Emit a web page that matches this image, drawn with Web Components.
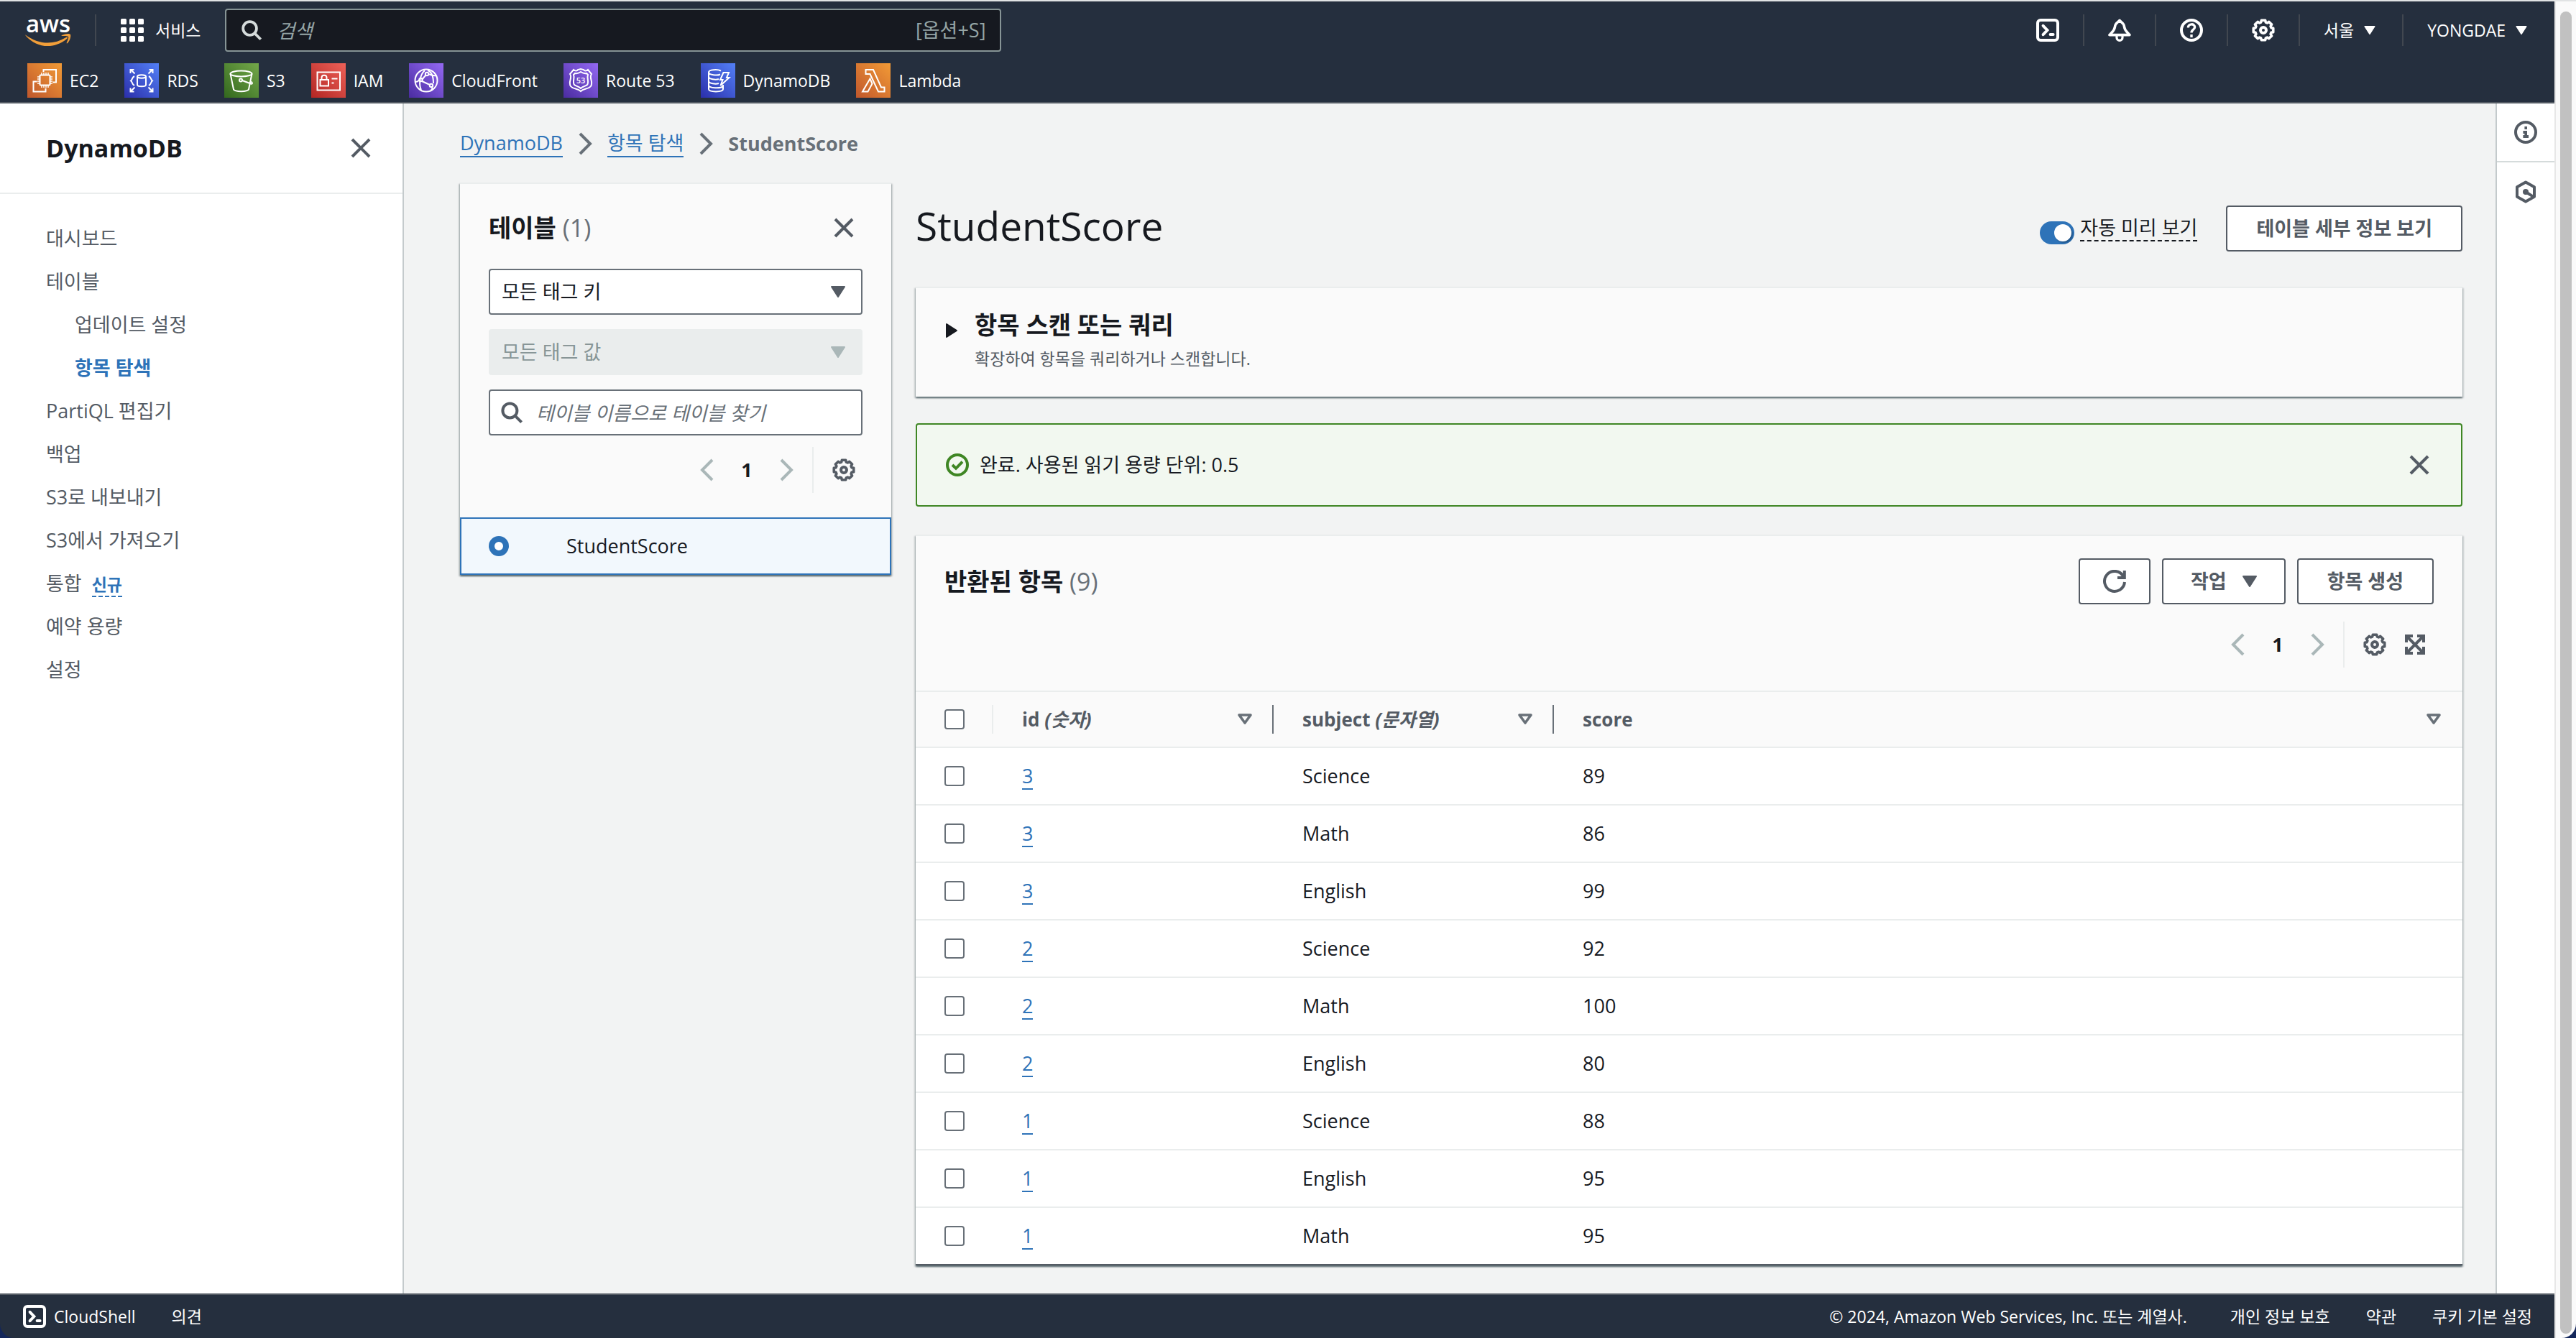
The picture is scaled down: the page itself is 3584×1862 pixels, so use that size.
<!DOCTYPE html>
<html lang="ko">
<head>
<meta charset="utf-8">
<title>DynamoDB - StudentScore</title>
<style>
  :root {
    --ink: #16191f; --body: #545b64; --muted: #687078; --faint: #aab7b8;
    --line: #eaeded; --blue: #2e73b8; --navy: #252f3e; --green: #3f8624;
    --t-xs: 23px; --t-md: 27px; --t-lg: 34px; --t-xl: 55px;
  }
  html { background: #13265a; }
  body {
    margin: 0; color: var(--ink); font-size: var(--t-md); line-height: 40px;
    font-family: "Open Sans", "Noto Sans CJK KR", sans-serif;
  }
</style>
</head>
<body>
<console-app></console-app>

<script>
const RESET = `
  *, *::before { box-sizing: border-box; }
  h1, h2, p, ul, ol { margin: 0; padding: 0; list-style: none; }
  a { color: inherit; text-decoration: none; }
  button, input, select { font: inherit; color: inherit; margin: 0; }
  button { background: none; border: 0; padding: 0; display: flex; align-items: center; cursor: pointer; }
`;
function define(tag, css, html) {
  customElements.define(tag, class extends HTMLElement {
    constructor() {
      super();
      const root = this.attachShadow({ mode: 'open' });
      const markup = typeof html === 'function' ? html(this) : html;
      root.innerHTML = `<style>${RESET}${css}</style>${markup}`;
    }
  });
}

/* ---------- icons ---------- */
function gearPath() {
  const pts = [];
  for (let i = 0; i < 8; i++) {
    const c = i * Math.PI / 4;
    for (const [d, r] of [[-0.3, 5.7], [-0.19, 7], [0.19, 7], [0.3, 5.7]])
      pts.push((8 + r * Math.sin(c + d)).toFixed(2) + ' ' + (8 - r * Math.cos(c + d)).toFixed(2));
  }
  return 'M' + pts.join('L') + 'Z';
}
const ICONS = {
  close: '<path d="M2 2l12 12M14 2L2 14"/>',
  right: '<path d="M4.5 1l7 7-7 7"/>',
  left: '<path d="M11.5 1l-7 7 7 7"/>',
  caret: '<path d="M3.5 4.5h9l-4.5 7z" fill="currentColor" stroke-width="1" stroke-linejoin="round"/>',
  play: '<path d="M4.5 3.5v9l7-4.5z" fill="currentColor" stroke-width="1" stroke-linejoin="round"/>',
  sort: '<path d="M4 5h8l-4 5.5z" stroke-width="1.8" stroke-linejoin="round"/>',
  search: '<circle cx="6.7" cy="6.7" r="5"/><path d="M10.2 10.2l4.6 4.6"/>',
  gear: `<path d="${gearPath()}" stroke-width="1.8" stroke-linejoin="round"/><circle cx="8" cy="8" r="2"/>`,
  expand: '<path d="M2 6.5V2h4.5M9.5 2H14v4.5M14 9.5V14H9.5M6.5 14H2V9.5M2 2l12 12M14 2L2 14"/>',
  refresh: '<path d="M15 8.5A7 7 0 1 1 14 4.3M10 5.5h4.900V0.5"/>',
  terminal: '<rect x="1" y="1" width="14" height="14" rx="2"/><path d="M4.8 4.9L7.7 8l-2.9 3.1M9.8 11h2" stroke-linecap="round"/>',
  bell: '<path d="M8 1.2C7 2.6 5 2.8 4.7 5.8 4.4 8.5 2.7 9.3 1 11.3h14c-1.7-2-3.4-2.8-3.7-5.5C11 2.8 9 2.6 8 1.2z" stroke-width="1.8" stroke-linejoin="round"/><path d="M6 12v1.2a2 2 0 0 0 4 0V12" stroke-width="1.6"/>',
  help: '<circle cx="8" cy="8" r="7"/><path d="M5.7 6.2c0-3 4.6-3 4.6-.3C10.3 7.7 8 7.6 8 9.7M8 11v2" stroke-width="1.7"/>',
  info: '<circle cx="8" cy="8" r="7"/><path d="M7.2 4v2h1.8V4zM6.2 7h2.8v3h1v2H6.2v-2h1V9h-1z" fill="currentColor" stroke="none"/>',
  hex: '<path d="M8 1.2l6 3.4v6.8l-6 3.4-6-3.4V4.6z" stroke-linejoin="round"/><circle cx="8" cy="8" r="2" fill="currentColor" stroke="none"/><path d="M8 8l5 3.2"/>',
  ok: '<circle cx="8" cy="8" r="7"/><path d="M4.5 8l2.5 2.4 4.5-4.6"/>',
  grid: '<g fill="currentColor" stroke="none">' + [0, 6, 12].map(y => [0, 6, 12].map(x =>
    `<rect x="${x}" y="${y}" width="4" height="4" rx="0.8"/>`).join('')).join('') + '</g>'
};
define('ui-icon', `
  :host { display: block; flex: none; width: var(--icon, 32px); height: var(--icon, 32px); }
  svg { display: block; width: 100%; height: 100%; fill: none; stroke: currentColor; stroke-width: 2; }
`, el => `<svg viewBox="0 0 16 16" aria-hidden="true">${ICONS[el.getAttribute('name')]}</svg>`);

const SERVICES = {
  ec2: ['#c0572c', '#f29b36', '<rect x="17.5" y="16.5" width="14" height="14" rx="1"/><path d="M20 16v-3M23 16v-3M26 16v-3M29 16v-3M20 34v-3M23 34v-3M26 34v-3M29 34v-3M17 19h-3M17 22h-3M17 25h-3M17 28h-3M35 19h-3M35 22h-3M35 25h-3M35 28h-3" stroke-width="1.5"/><path d="M22.5 12V9H40v17.5h-4.5M13.5 25.5h-5v14h17V35"/>'],
  rds: ['#2b2faa', '#5380f7', '<ellipse cx="24" cy="18.5" rx="6" ry="2.2"/><path d="M18 18.5v11.5c0 3 12 3 12 0V18.5M14 18c-4 2-2 4-5 6.5 3 2 1 4.5 5 6.5M34 18c4 2 2 4 5 6.5-3 2-1 4.5-5 6.5M8.5 14V9h5M9 9l5.5 5.5M39.5 14V9h-5M39 9l-5.5 5.5M8.5 34.5v5h5M9 39l5.5-5.5M39.5 34.5v5h-5M39 39l-5.5-5.5"/>'],
  s3: ['#33681e', '#74a84a', '<ellipse cx="23.5" cy="14.5" rx="15" ry="4"/><path d="M8.5 14.5L13 36.5c2 3.5 19 3.5 21 0l4.5-22M25 24l12 4.5c3 1 2-1.5.5-3"/><circle cx="23" cy="23.5" r="2"/>'],
  iam: ['#b22623', '#ee6158', '<rect x="8.5" y="12.5" width="31.5" height="25"/><rect x="12.5" y="23" width="11.5" height="8.5"/><path d="M14.5 23v-3c0-4.5 7-4.5 7 0v3M28.5 21.5h8M28.5 27.5h3"/>'],
  cf: ['#4a2ca0', '#9469f3', '<circle cx="24" cy="24" r="15.5"/><path d="M9 26c4 0 4-2 6-3M17 37c-3-6-3-20 5-27M30 38c4-2 2-4 1-6M26 10c6 2 8 8 8 18M38 17c-3 1-6 0-11-2M18 23l5-6M18 25l11 5"/><circle cx="16.5" cy="23" r="2.2"/><circle cx="25" cy="15" r="2.2"/><circle cx="31" cy="31" r="2.2"/>'],
  r53: ['#4a2ca0', '#9469f3', '<path d="M14 9c2 2 5 2 6 0l4-1 4 1c1 2 4 2 6 0l5 6c-4 5 3 11-1 17-3 4-10 3-14 7-4-4-11-3-14-7-4-6 3-12-1-17z"/><path d="M16 14c3 1 5 0 8-2 3 2 5 3 8 2l2 2c-2 5 2 10-1 14-2 2-6 2-9 5-3-3-7-3-9-5-3-4 1-9-1-14z"/><text x="24" y="28" text-anchor="middle" font-size="11" font-weight="600" fill="#fff" stroke="none">53</text>'],
  ddb: ['#2b2faa', '#5380f7', '<path d="M28 10.5c-5-2.5-17-1.5-17 2 0 4 12 5 16 3M11 12.5V36c0 4.5 20 4.5 20 0v-6M11 18.5c0 4 10 5 14 3.5M11 24.5c0 4 10 5 14 3.5M11 30.5c0 4.5 17 5 20 1.5M31.5 13H39l-3 7h3.5L27.5 31l3-8H27z"/>'],
  lambda: ['#c0572c', '#f29b36', '<path d="M13.5 9H24l11 24.5h4.5v6H31L19.5 15h-6zM19.5 21.5L9 39.5h7.5l6-11z"/>']
};
define('service-shortcut', `
  :host { display: block; }
  a { display: flex; align-items: center; gap: 11px; font-size: var(--t-xs); font-weight: 500; color: #fff; }
  svg { display: block; width: 48px; height: 48px; fill: none; stroke: #fff; stroke-width: 2; }
`, el => {
  const k = el.getAttribute('kind'), s = SERVICES[k];
  return `<a href="#"><svg viewBox="0 0 48 48" aria-hidden="true">
    <linearGradient id="g" x1="0" y1="1" x2="1" y2="0"><stop offset="0" stop-color="${s[0]}"/><stop offset="1" stop-color="${s[1]}"/></linearGradient>
    <rect width="48" height="48" fill="url(#g)" stroke="none"/>${s[2]}</svg><slot></slot></a>`;
});

/* ---------- top bar ---------- */
define('top-nav', `
  :host { display: block; background: var(--navy); color: #fff; border-top: 2px solid #e1e3e4; border-bottom: 2px solid #545b64; }
  .bar { display: flex; align-items: center; height: 80px; padding: 0 34px; font-size: var(--t-xs); }
  .logo { display: block; width: 66px; height: 72px; margin-right: 32px; }
  i { width: 2px; height: 44px; background: #414750; }
  .services { gap: 16px; margin: 0 34px; }
  .search { display: grid; grid-template-columns: 1fr; align-items: center; width: 1080px; height: 60px; font-size: var(--t-md); color: #95a5a6; }
  .search > * { grid-area: 1 / 1; }
  .search input { width: 100%; height: 60px; padding: 0 120px 0 70px; background: #161920; border: 2px solid #879596; border-radius: 4px; }
  .search input::placeholder { color: #95a5a6; font-style: italic; opacity: 1; }
  .search ui-icon { --icon: 30px; margin-left: 22px; color: #d5dbdb; z-index: 1; }
  .search kbd { font: inherit; justify-self: end; margin-right: 22px; }
  .tools { display: flex; align-items: center; gap: 33px; margin-left: auto; }
  .tools button { gap: 10px; font-weight: 500; }
  .tools .ko { font-weight: 400; }
  .tools .menu ui-icon { --icon: 24px; }
  .favs { display: flex; gap: 36px; height: 60px; padding: 6px 38px; }
`, `
  <div class="bar">
    <a href="#" aria-label="AWS"><svg class="logo" viewBox="0 -12 66 72">
      <text x="33" y="27" text-anchor="middle" font-size="33" font-weight="600" fill="#fff">aws</text>
      <path d="M2 31c18 13 38 14 56 3 2-1 3 1 1 2-18 15-42 13-57-4-1-1 0-2 0-1z" fill="#f19e39"/>
      <path d="M52 31c5-2 10-3 12-1 1 3-1 9-4 12-1 1-2 0-1-1 1-3 3-7 2-8-1-1-5-1-8-1-2 0-2-1-1-1z" fill="#f19e39"/></svg></a>
    <i></i>
    <button class="services"><ui-icon name="grid"></ui-icon>서비스</button>
    <div class="search"><input type="search" aria-label="검색" placeholder="검색"><ui-icon name="search"></ui-icon><kbd>[옵션+S]</kbd></div>
    <div class="tools">
      <button aria-label="CloudShell"><ui-icon name="terminal"></ui-icon></button><i></i>
      <button aria-label="알림"><ui-icon name="bell"></ui-icon></button><i></i>
      <button aria-label="도움말"><ui-icon name="help"></ui-icon></button><i></i>
      <button aria-label="설정"><ui-icon name="gear"></ui-icon></button><i></i>
      <button class="menu ko">서울<ui-icon name="caret"></ui-icon></button><i></i>
      <button class="menu">YONGDAE<ui-icon name="caret"></ui-icon></button>
    </div>
  </div>
  <nav class="favs">
    <service-shortcut kind="ec2">EC2</service-shortcut>
    <service-shortcut kind="rds">RDS</service-shortcut>
    <service-shortcut kind="s3">S3</service-shortcut>
    <service-shortcut kind="iam">IAM</service-shortcut>
    <service-shortcut kind="cf">CloudFront</service-shortcut>
    <service-shortcut kind="r53">Route 53</service-shortcut>
    <service-shortcut kind="ddb">DynamoDB</service-shortcut>
    <service-shortcut kind="lambda">Lambda</service-shortcut>
  </nav>`);

/* ---------- side navigation ---------- */
define('side-nav', `
  :host { display: block; background: #fff; border-right: 2px solid #c4cacc; color: var(--body); }
  header { display: flex; align-items: center; justify-content: space-between; height: 126px; padding: 0 42px 0 64px; border-bottom: 2px solid var(--line); }
  h2 { font-size: var(--t-lg); color: var(--ink); }
  ul { padding: 32px 64px; }
  li { height: 60px; line-height: 60px; }
  .sub { padding-left: 40px; }
  .on { color: var(--blue); font-weight: 700; }
  .new { margin-left: 14px; font-size: var(--t-xs); font-weight: 600; color: var(--blue); border-bottom: 2px dashed; }
`, `
  <header><h2><a href="#">DynamoDB</a></h2><button aria-label="닫기"><ui-icon name="close"></ui-icon></button></header>
  <nav><ul>
    <li><a href="#">대시보드</a></li>
    <li><a href="#">테이블</a></li>
    <li class="sub"><a href="#">업데이트 설정</a></li>
    <li class="sub"><a class="on" href="#">항목 탐색</a></li>
    <li><a href="#">PartiQL 편집기</a></li>
    <li><a href="#">백업</a></li>
    <li><a href="#">S3로 내보내기</a></li>
    <li><a href="#">S3에서 가져오기</a></li>
    <li><a href="#">통합</a><a class="new" href="#">신규</a></li>
    <li><a href="#">예약 용량</a></li>
    <li><a href="#">설정</a></li>
  </ul></nav>`);

define('bread-crumbs', `
  :host { display: block; }
  ol { display: flex; align-items: center; gap: 15px; height: 40px; color: var(--muted); }
  a { display: block; color: var(--blue); line-height: 36px; border-bottom: 2px solid; }
  li[aria-current] { font-weight: 700; }
`, `
  <ol><li><a href="#">DynamoDB</a></li><ui-icon name="right"></ui-icon>
  <li><a href="#">항목 탐색</a></li><ui-icon name="right"></ui-icon>
  <li aria-current="page">StudentScore</li></ol>`);

/* ---------- shared pieces ---------- */
define('ui-panel', `
  :host { display: block; background: #fafafa; border-top: 2px solid var(--line);
    box-shadow: 0 2px 2px rgba(0,28,36,.5), 2px 2px 2px rgba(0,28,36,.15), -2px 2px 2px rgba(0,28,36,.15); }
`, '<slot></slot>');

define('ui-button', `
  :host { display: block; }
  button { height: 64px; padding: 0 40px; gap: 16px; color: var(--body); background: #fff; border: 2px solid var(--body); border-radius: 4px; font-weight: 700; white-space: nowrap; }
  :host([compact]) button { padding: 0 32px; }
  :host([menu]) button { padding: 0 32px 0 38px; }
`, el => `<button ${el.hasAttribute('label') ? `aria-label="${el.getAttribute('label')}"` : ''}><slot></slot></button>`);

define('ui-pager', `
  :host { display: flex; align-items: center; height: 64px; color: var(--body); }
  button { color: var(--faint); }
  b { width: 78px; text-align: center; color: var(--ink); }
  .set { display: flex; align-items: center; align-self: stretch; gap: 24px; margin-left: 20px; padding: 0 10px 0 26px; border-left: 2px solid var(--line); }
`, `<button aria-label="이전 페이지"><ui-icon name="left"></ui-icon></button><b>1</b>
  <button aria-label="다음 페이지"><ui-icon name="right"></ui-icon></button>
  <div class="set"><slot></slot></div>`);

/* ---------- table picker ---------- */
define('table-picker', `
  :host { display: block; }
  .head { display: flex; flex-direction: column; gap: 20px; padding: 40px 40px 34px; }
  header { display: flex; align-items: center; justify-content: space-between; height: 42px; margin-bottom: 16px; padding-right: 10px; }
  h2 { font-size: var(--t-lg); } h2 span { font-weight: 400; color: var(--muted); }
  header button { color: var(--body); }
  .field { display: grid; align-items: center; height: 64px; }
  .field > * { grid-area: 1 / 1; }
  .field ui-icon { z-index: 1; pointer-events: none; color: var(--body); }
  select, input[type=search] { width: 100%; height: 64px; padding: 0 16px; background: #fff; border: 2px solid var(--muted); border-radius: 4px; appearance: none; opacity: 1; }
  select + ui-icon { justify-self: end; margin-right: 18px; }
  select:disabled { background: var(--line); border-color: var(--line); color: #879596; }
  select:disabled + ui-icon { color: var(--faint); }
  input[type=search] { padding-left: 64px; }
  input[type=search]::placeholder { color: var(--muted); font-style: italic; opacity: 1; }
  input + ui-icon { margin-left: 16px; }
  ui-pager { align-self: flex-end; margin-top: -4px; }
  .row { display: flex; align-items: center; gap: 80px; height: 80px; padding: 0 38px; background: #f2f8fd; border: 2px solid var(--blue); }
  input[type=radio] { appearance: none; width: 28px; height: 28px; background: #fff; border: 8px solid var(--blue); border-radius: 50%; }
  .gear { color: var(--body); }
`, `
  <ui-panel>
    <div class="head">
      <header><h2>테이블 <span>(1)</span></h2><button aria-label="닫기"><ui-icon name="close"></ui-icon></button></header>
      <div class="field"><select aria-label="태그 키"><option>모든 태그 키</option></select><ui-icon name="caret"></ui-icon></div>
      <div class="field"><select aria-label="태그 값" disabled><option>모든 태그 값</option></select><ui-icon name="caret"></ui-icon></div>
      <div class="field"><input type="search" aria-label="테이블 찾기" placeholder="테이블 이름으로 테이블 찾기"><ui-icon name="search"></ui-icon></div>
      <ui-pager><button class="gear" aria-label="기본 설정"><ui-icon name="gear"></ui-icon></button></ui-pager>
    </div>
    <label class="row"><input type="radio" name="table" checked>StudentScore</label>
  </ui-panel>`);

/* ---------- returned items ---------- */
const ITEMS = [[3, 'Science', 89], [3, 'Math', 86], [3, 'English', 99], [2, 'Science', 92], [2, 'Math', 100],
  [2, 'English', 80], [1, 'Science', 88], [1, 'English', 95], [1, 'Math', 95]];
define('item-results', `
  :host { display: block; }
  .top { display: flex; align-items: center; gap: 16px; padding: 31px 40px 0; }
  h2 { flex: 1; font-size: var(--t-lg); } h2 span { font-weight: 400; color: var(--muted); }
  .pages { display: flex; justify-content: flex-end; padding: 24px 40px 32px; }
  .pages button { color: var(--body); }
  table { width: 100%; table-layout: fixed; border-collapse: separate; border-spacing: 0; background: #fff; text-align: left; }
  th, td { height: 80px; padding: 0 40px; border-bottom: 2px solid var(--line); }
  tbody tr:last-child td { border-bottom-color: #545b64; }
  .c0 { width: 108px; } .c1 { width: 390px; }
  th { background: #fafafa; color: var(--body); font-size: 26px; border-top: 2px solid var(--line); padding: 0; }
  th div { display: flex; align-items: center; justify-content: space-between; height: 40px; padding: 0 22px 0 40px; border-right: 2px solid var(--muted); }
  th:first-child div { border-color: var(--line); } th:last-child div { border: 0; padding-right: 24px; }
  th button { color: var(--muted); }
  td a { display: inline-block; color: var(--blue); line-height: 34px; border-bottom: 2px solid; }
  input { display: block; appearance: none; width: 28px; height: 28px; background: #fff; border: 2px solid var(--muted); border-radius: 4px; }
  td:first-child { padding-right: 0; }
`, `
  <ui-panel>
    <div class="top"><h2>반환된 항목 <span>(9)</span></h2>
      <ui-button compact label="새로 고침"><ui-icon name="refresh"></ui-icon></ui-button>
      <ui-button menu><span>작업</span><ui-icon name="caret"></ui-icon></ui-button>
      <ui-button>항목 생성</ui-button></div>
    <div class="pages"><ui-pager><button aria-label="기본 설정"><ui-icon name="gear"></ui-icon></button><button aria-label="전체 화면"><ui-icon name="expand"></ui-icon></button></ui-pager></div>
    <table>
      <colgroup><col class="c0"><col class="c1"><col class="c1"><col></colgroup>
      <thead><tr>
        <th><div><input type="checkbox" aria-label="모두 선택"></div></th>
        <th><div><span>id <em>(숫자)</em></span><button aria-label="id 정렬"><ui-icon name="sort"></ui-icon></button></div></th>
        <th><div><span>subject <em>(문자열)</em></span><button aria-label="subject 정렬"><ui-icon name="sort"></ui-icon></button></div></th>
        <th><div><span>score</span><button aria-label="score 정렬"><ui-icon name="sort"></ui-icon></button></div></th>
      </tr></thead>
      <tbody>${ITEMS.map(([id, s, n]) => `<tr><td><input type="checkbox" aria-label="${id} ${s}"></td><td><a href="#">${id}</a></td><td>${s}</td><td>${n}</td></tr>`).join('')}</tbody>
    </table>
  </ui-panel>`);

/* ---------- explorer column ---------- */
define('item-explorer', `
  :host { display: flex; flex-direction: column; min-width: 0; }
  .title { display: flex; align-items: center; height: 64px; margin: 32px 0 49px; }
  h1 { flex: 1; align-self: flex-start; font-size: var(--t-xl); font-weight: 400; line-height: 56px; }
  label { display: flex; align-items: center; gap: 8px; margin-right: 40px; }
  label span { line-height: 34px; border-bottom: 2px dashed; }
  label input { appearance: none; display: flex; align-items: center; justify-content: flex-end; width: 48px; height: 32px; margin-top: 12px; padding: 4px; border-radius: 16px; background: var(--blue); }
  label input::before { content: ""; width: 24px; height: 24px; border-radius: 50%; background: #fff; box-shadow: 2px 2px 2px rgba(0,0,0,.25); }
  .scan { display: flex; align-items: flex-start; gap: 16px; padding: 29px 34px 28px; }
  .scan ui-icon { margin-top: 14px; } .scan h2 { font-size: var(--t-lg); line-height: 44px; } .scan p { font-size: var(--t-xs); color: var(--body); line-height: 50px; }
  .alert { display: flex; align-items: center; gap: 15px; height: 116px; margin: 37px 0 39px; padding: 0 42px 0 40px; background: #f2f8f0; border: 2px solid var(--green); border-radius: 4px; }
  .alert > ui-icon { color: var(--green); } .alert p { flex: 1; } .alert button { color: var(--body); }
`, `
  <div class="title"><h1>StudentScore</h1>
    <label><input type="checkbox" role="switch" checked><span>자동 미리 보기</span></label>
    <ui-button>테이블 세부 정보 보기</ui-button></div>
  <ui-panel><div class="scan"><button aria-label="펼치기"><ui-icon name="play"></ui-icon></button><div><h2>항목 스캔 또는 쿼리</h2><p>확장하여 항목을 쿼리하거나 스캔합니다.</p></div></div></ui-panel>
  <div class="alert" role="status"><ui-icon name="ok"></ui-icon><p>완료. 사용된 읽기 용량 단위: 0.5</p><button aria-label="닫기"><ui-icon name="close"></ui-icon></button></div>
  <item-results></item-results>`);

define('tool-rail', `
  :host { display: block; background: #fff; color: var(--body); border-left: 2px solid #c4cacc; }
  button { width: 100%; height: 82px; justify-content: center; border-bottom: 2px solid #d5dbdb; }
  button:last-child { border: 0; }
`, '<button aria-label="정보"><ui-icon name="info"></ui-icon></button><button aria-label="진단"><ui-icon name="hex"></ui-icon></button>');

define('bottom-bar', `
  :host { display: flex; align-items: center; gap: 50px; height: 62px; padding: 0 31px 0 32px; background: var(--navy); color: #fff; font-size: var(--t-xs); border-top: 2px solid #545b64; box-sizing: border-box; }
  .shell { gap: 11px; font-weight: 500; }
  p { margin: 0 10px 0 auto; font-weight: 500; }
  p span { font-weight: 400; }
`, `<button class="shell"><ui-icon name="terminal"></ui-icon>CloudShell</button><a href="#">의견</a>
  <p>© 2024, Amazon Web Services, Inc. <span>또는 계열사.</span></p><a href="#">개인 정보 보호</a><a href="#">약관</a><a href="#">쿠키 기본 설정</a>`);

define('scroll-track', `
  :host { display: flex; padding: 14px 6px 6px; background: #fafafa; border-left: 2px solid #e7e7e7; border-top: 2px solid #e1e3e4; }
  div { flex: 1; border-radius: 8px; background: #c1c1c1; }
`, '<div></div>');

define('console-app', `
  :host { display: grid; grid-template-columns: minmax(0, 1fr) 30px; min-height: 100vh; border-radius: 0 0 20px 20px; overflow: hidden; }
  .page { display: flex; flex-direction: column; min-width: 0; }
  .mid { flex: 1; display: flex; }
  side-nav { flex: none; width: 562px; }
  main { flex: 1; min-width: 0; background: #f2f3f3; padding: 36px 46px 36px 78px; }
  .cols { display: flex; align-items: flex-start; gap: 34px; }
  table-picker { flex: none; width: 600px; margin-top: 34px; }
  item-explorer { flex: 1; margin-top: 34px; }
  tool-rail { flex: none; width: 82px; }
`, `
  <div class="page">
    <top-nav></top-nav>
    <div class="mid"><side-nav></side-nav>
      <main><bread-crumbs></bread-crumbs><div class="cols"><table-picker></table-picker><item-explorer></item-explorer></div></main>
      <tool-rail></tool-rail></div>
    <bottom-bar></bottom-bar>
  </div>
  <scroll-track></scroll-track>`);
</script>
</body>
</html>
